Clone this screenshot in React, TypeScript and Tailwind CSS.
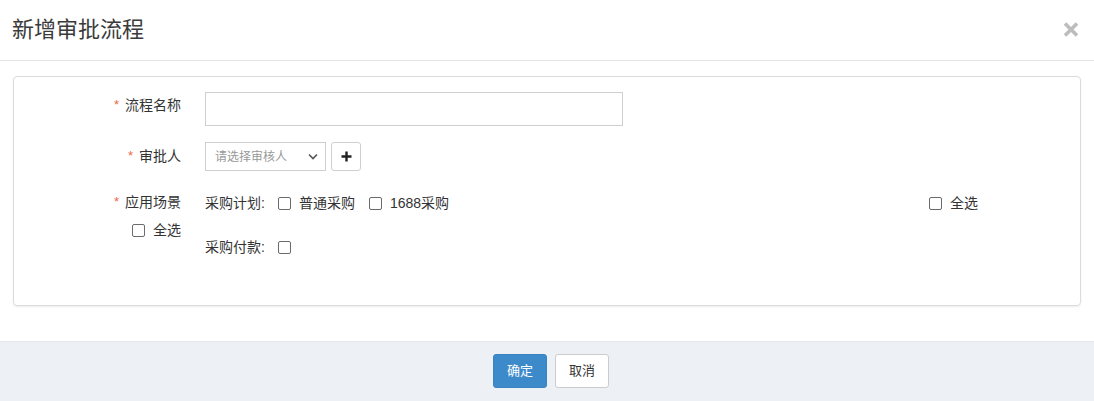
import React from "react";

const Box = () => (
  <span className="inline-block w-[13px] h-[13px] border border-[#6b6b6b] rounded-[2px] bg-white shrink-0" />
);

const Star = () => <span className="text-[#ec6a48] text-[13px] mr-[6px] relative top-[-1px]">*</span>;

export default function App() {
  return (
    <div
      className="w-[1094px] h-[401px] bg-white flex flex-col text-[#333] text-[14px] leading-[20px]"
      style={{ fontFamily: '"Liberation Sans", "Noto Sans CJK SC", sans-serif' }}
    >
      <header className="h-[61px] shrink-0 border-b border-[#e5e5e5] flex items-center justify-between pl-[12px] pr-[15px]">
        <h4 className="text-[22px] leading-[30px] text-[#3a3a3a]">新增审批流程</h4>
        <svg width="16" height="15" viewBox="0 0 16 15" className="mb-[2px]">
          <path d="M2 1.5 L14 13.5 M14 1.5 L2 13.5" stroke="#bdbdbd" strokeWidth="3.6" />
        </svg>
      </header>

      <div className="px-[13px] pt-[15px] shrink-0">
        <div className="h-[230px] border border-[#dcdcdc] rounded-[4px] shadow-[0_1px_2px_rgba(0,0,0,0.08)] pt-[15px]">
          {/* row 1 */}
          <div className="flex">
            <div className="w-[167px] text-right pt-[3px] shrink-0">
              <Star />流程名称
            </div>
            <div className="ml-[24px]">
              <div className="w-[418px] h-[34px] border border-[#cfcfcf] bg-white" />
            </div>
          </div>
          {/* row 2 */}
          <div className="flex mt-[16px]">
            <div className="w-[167px] text-right pt-[4px] shrink-0">
              <Star />审批人
            </div>
            <div className="ml-[24px] flex gap-[5px]">
              <div className="w-[121px] h-[29px] border border-[#cfcfcf] flex items-center justify-between pl-[9px] pr-[7px] text-[12px] text-[#999]">
                <span>请选择审核人</span>
                <svg width="10" height="7" viewBox="0 0 10 7">
                  <path d="M1 1.5 L5 5.5 L9 1.5" stroke="#555" strokeWidth="1.6" fill="none" />
                </svg>
              </div>
              <div className="w-[30px] h-[29px] border border-[#cfcfcf] rounded-[3px] flex items-center justify-center bg-white">
                <svg width="11" height="11" viewBox="0 0 11 11">
                  <path d="M5.5 0.5 V10.5 M0.5 5.5 H10.5" stroke="#222" strokeWidth="2.4" />
                </svg>
              </div>
            </div>
          </div>
          {/* row 3 */}
          <div className="flex mt-[21px]">
            <div className="w-[167px] shrink-0 flex flex-col items-end">
              <div>
                <Star />应用场景
              </div>
              <div className="flex items-center gap-[8px] mt-[7px]">
                <Box />
                <span>全选</span>
              </div>
            </div>
            <div className="ml-[24px] pt-[1px] w-[773px]">
              <div className="flex items-center">
                <span>采购计划:</span>
                <span className="ml-[13px] flex items-center gap-[8px]">
                  <Box />
                  <span>普通采购</span>
                </span>
                <span className="ml-[14px] flex items-center gap-[8px]">
                  <Box />
                  <span>1688采购</span>
                </span>
                <span className="ml-auto flex items-center gap-[8px]">
                  <Box />
                  <span>全选</span>
                </span>
              </div>
              <div className="flex items-center mt-[24px]">
                <span>采购付款:</span>
                <span className="ml-[13px] flex items-center">
                  <Box />
                </span>
              </div>
            </div>
          </div>
        </div>
      </div>

      <footer className="mt-[35px] flex-1 bg-[#edf0f5] border-t border-[#e3e6eb] flex justify-center items-center gap-[8px] pl-[8px] pb-[2px]">
        <button className="w-[54px] h-[34px] rounded-[3px] bg-[#3d8acb] border border-[#3a83c2] text-white text-[13px]">
          确定
        </button>
        <button className="w-[54px] h-[34px] rounded-[3px] bg-white border border-[#cccccc] text-[#333] text-[13px]">
          取消
        </button>
      </footer>
    </div>
  );
}
